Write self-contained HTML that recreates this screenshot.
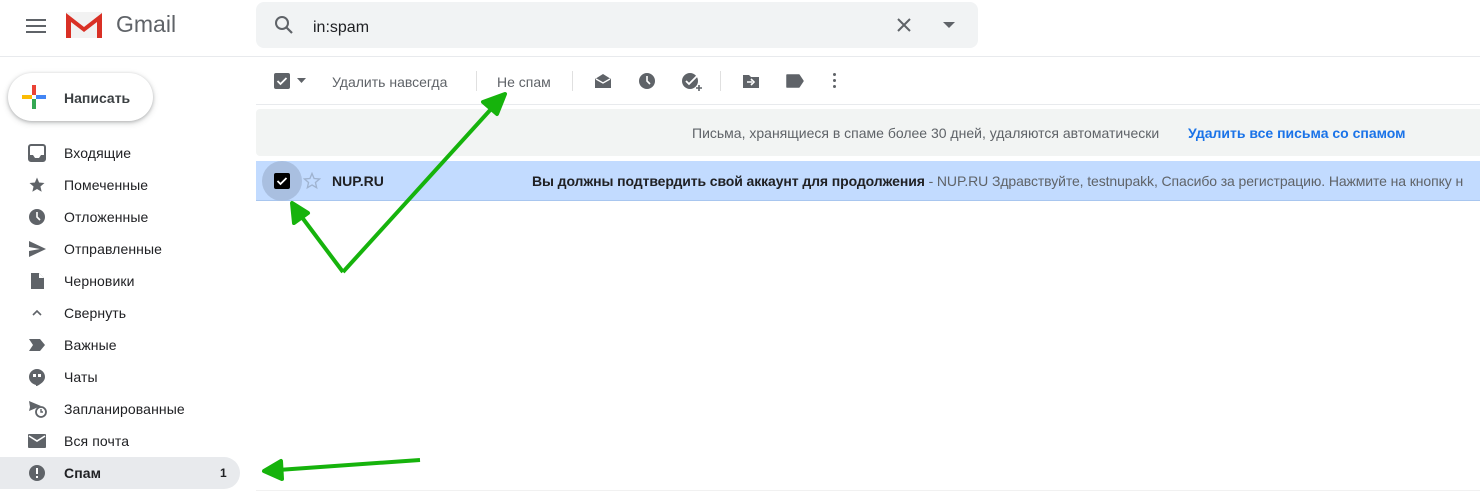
<!DOCTYPE html>
<html><head><meta charset="utf-8"><style>
*{margin:0;padding:0;box-sizing:border-box}
body{width:1480px;height:497px;overflow:hidden;background:#fff;font-family:"Liberation Sans",Arial,sans-serif;position:relative;color:#202124}
.a{position:absolute}
.nav{position:absolute;left:64px;font-size:14px;color:#202124;letter-spacing:0.1px}
.ic{position:absolute;left:28px}
</style></head><body>
<div class="a" style="left:26px;top:19px;width:20px;height:2px;background:#5f6368;box-shadow:0 6px 0 #5f6368,0 12px 0 #5f6368"></div>
<svg class="a" style="left:64px;top:11px" width="40" height="28" viewBox="0 0 40 28">
<rect x="2" y="1" width="36" height="26" fill="#f2f2f2"/>
<path d="M2 27V2l18 14L38 2v25h-5V11L20 21 7 11v16z" fill="#d93025"/>
</svg>
<div class="a" style="left:116px;top:11px;font-size:23px;color:#5f6368">Gmail</div>
<div class="a" style="left:256px;top:2px;width:722px;height:46px;background:#f1f3f4;border-radius:8px"></div>
<svg class="a" style="left:274px;top:15px" width="20" height="20" viewBox="0 0 20 20"><circle cx="8" cy="8" r="6" fill="none" stroke="#5f6368" stroke-width="2"/><path d="M12.5 12.5l5.5 5.5" stroke="#5f6368" stroke-width="2.2"/></svg>
<div class="a" style="left:313px;top:19px;font-size:16px;color:#202124">in:spam</div>
<svg class="a" style="left:896px;top:17px" width="16" height="16"><path d="M2 2l12 12M14 2L2 14" stroke="#5f6368" stroke-width="2"/></svg>
<svg class="a" style="left:943px;top:22px" width="12" height="7"><path d="M0 0h12L6 6z" fill="#5f6368"/></svg>
<div class="a" style="left:0;top:56px;width:1480px;height:1px;background:#e8eaed"></div>
<div class="a" style="left:8px;top:73px;width:145px;height:48px;border-radius:24px;background:#fff;box-shadow:0 1px 3px rgba(60,64,67,.3),0 2px 6px 1px rgba(60,64,67,.15)"></div>
<svg class="a" style="left:22px;top:85px" width="24" height="24" viewBox="0 0 24 24">
<rect x="10" y="0" width="4" height="10" fill="#ea4335"/><rect x="14" y="10" width="10" height="4" fill="#4285f4"/><rect x="10" y="14" width="4" height="10" fill="#34a853"/><rect x="0" y="10" width="10" height="4" fill="#fbbc04"/></svg>
<div class="a" style="left:64px;top:90px;font-size:14px;font-weight:bold;color:#3c4043">Написать</div>
<div class="a" style="left:0;top:457px;width:240px;height:32px;background:#e8eaed;border-radius:0 16px 16px 0"></div>
<svg class="ic" style="top:144px" width="18" height="18"><rect x="1" y="1" width="16" height="16" rx="2" fill="none" stroke="#5f6368" stroke-width="2"/><path d="M1 11h4l2 3h4l2-3h4v6H1z" fill="#5f6368"/></svg>
<div class="nav" style="top:145px">Входящие</div>
<svg class="ic" style="top:176px" width="18" height="18" viewBox="0 0 24 24"><path d="M12 17.3l6.2 3.7-1.6-7 5.4-4.7-7.2-.6L12 2 9.2 8.7 2 9.3l5.4 4.7-1.6 7z" fill="#5f6368"/></svg>
<div class="nav" style="top:177px">Помеченные</div>
<svg class="ic" style="top:208px" width="18" height="18"><circle cx="9" cy="9" r="8" fill="#5f6368"/><path d="M9 4v5l3 3" stroke="#fff" stroke-width="1.6" fill="none"/></svg>
<div class="nav" style="top:209px">Отложенные</div>
<svg class="ic" style="top:240px" width="18" height="18"><path d="M1 1l17 8-17 8 0-6 11-2-11-2z" fill="#5f6368"/></svg>
<div class="nav" style="top:241px">Отправленные</div>
<svg class="ic" style="top:272px" width="18" height="18"><path d="M3 1h8l5 5v11H3z" fill="#5f6368"/><path d="M11 1v5h5" fill="#fff"/></svg>
<div class="nav" style="top:273px">Черновики</div>
<svg class="ic" style="top:304px" width="18" height="18"><path d="M5 11l4-4 4 4" stroke="#5f6368" stroke-width="1.6" fill="none"/></svg>
<div class="nav" style="top:305px">Свернуть</div>
<svg class="ic" style="top:336px" width="18" height="18"><path d="M1 3h11l5 6-5 6H1l4-6z" fill="#5f6368"/></svg>
<div class="nav" style="top:337px">Важные</div>
<svg class="ic" style="top:368px" width="18" height="18"><path d="M9 1a8 8 0 0 0-8 8c0 4 3 7 7 8v1l1 0c4-2 8-5 8-9a8 8 0 0 0-8-8z" fill="#5f6368"/><rect x="5" y="6" width="3" height="3" fill="#fff"/><rect x="10" y="6" width="3" height="3" fill="#fff"/></svg>
<div class="nav" style="top:369px">Чаты</div>
<svg class="ic" style="top:400px" width="20" height="18"><path d="M1 1l12 5-12 5 1-4z" fill="#5f6368"/><circle cx="13" cy="12" r="5" fill="#fff" stroke="#5f6368" stroke-width="1.8"/><path d="M13 9v3h2" stroke="#5f6368" stroke-width="1.4" fill="none"/></svg>
<div class="nav" style="top:401px">Запланированные</div>
<svg class="ic" style="top:432px" width="18" height="18"><rect x="0" y="2" width="18" height="14" rx="1" fill="#5f6368"/><path d="M1 4l8 5 8-5" stroke="#fff" stroke-width="1.6" fill="none"/></svg>
<div class="nav" style="top:433px">Вся почта</div>
<svg class="ic" style="top:464px" width="18" height="18"><circle cx="9" cy="9" r="8" fill="#5f6368"/><rect x="8" y="4" width="2" height="6" fill="#fff"/><rect x="8" y="12" width="2" height="2" fill="#fff"/></svg>
<div class="nav" style="top:465px;font-weight:bold">Спам</div>
<div class="a" style="left:220px;top:466px;font-size:12px;font-weight:bold">1</div>
<div class="a" style="left:274px;top:73px;width:16px;height:16px;background:#5f6368;border-radius:2px"></div>
<svg class="a" style="left:274px;top:73px" width="16" height="16"><path d="M3.5 8l3 3 6-6" stroke="#fff" stroke-width="1.8" fill="none"/></svg>
<svg class="a" style="left:297px;top:78px" width="9" height="5"><path d="M0 0h9L4.5 5z" fill="#5f6368"/></svg>
<div class="a" style="left:332px;top:74px;font-size:14px;color:#5f6368">Удалить навсегда</div>
<div class="a" style="left:476px;top:71px;width:1px;height:20px;background:#e0e0e0"></div>
<div class="a" style="left:497px;top:74px;font-size:14px;color:#5f6368">Не спам</div>
<div class="a" style="left:572px;top:71px;width:1px;height:20px;background:#e0e0e0"></div>
<svg class="a" style="left:594px;top:72px" width="18" height="18"><path d="M1 7l8-5 8 5v9H1z" fill="#5f6368"/><path d="M2 7l7 4 7-4" stroke="#fff" stroke-width="1.3" fill="none"/></svg>
<svg class="a" style="left:638px;top:72px" width="18" height="18"><circle cx="9" cy="9" r="8" fill="#5f6368"/><path d="M9 4v5l3 3" stroke="#fff" stroke-width="1.6" fill="none"/></svg>
<svg class="a" style="left:681px;top:71px" width="22" height="22"><circle cx="9" cy="10" r="8" fill="#5f6368"/><path d="M5 10l3 3 9-9" stroke="#fff" stroke-width="1.8" fill="none"/><path d="M15 17h6M18 14v6" stroke="#5f6368" stroke-width="1.6"/></svg>
<div class="a" style="left:720px;top:71px;width:1px;height:20px;background:#e0e0e0"></div>
<svg class="a" style="left:742px;top:72px" width="18" height="18"><path d="M1 3h6l2 2h8v11H1z" fill="#5f6368"/><path d="M5 10h5M9 7l3 3-3 3" stroke="#fff" stroke-width="1.6" fill="none"/></svg>
<svg class="a" style="left:786px;top:73px" width="18" height="16"><path d="M1 2h12l4 6-4 6H1z" fill="#5f6368" stroke="#5f6368" stroke-linejoin="round" stroke-width="1.5"/></svg>
<div class="a" style="left:833px;top:73px;width:3px;height:3px;background:#5f6368;border-radius:50%;box-shadow:0 6px 0 #5f6368,0 12px 0 #5f6368"></div>
<div class="a" style="left:256px;top:104px;width:1224px;height:1px;background:#e8eaed"></div>
<div class="a" style="left:256px;top:109px;width:1224px;height:47px;background:#f2f4f3;border-radius:4px 0 0 4px"></div>
<div class="a" style="left:692px;top:125px;font-size:14px;color:#5f6368">Письма, хранящиеся в спаме более 30 дней, удаляются автоматически</div>
<div class="a" style="left:1188px;top:125px;font-size:14px;font-weight:bold;color:#1a73e8">Удалить все письма со спамом</div>
<div class="a" style="left:256px;top:161px;width:1224px;height:40px;background:#c2dbff;border-bottom:1px solid #a8c6ef"></div>
<div class="a" style="left:262px;top:161px;width:40px;height:40px;border-radius:50%;background:#a9bfe0"></div>
<div class="a" style="left:274px;top:173px;width:16px;height:16px;background:#000;border-radius:2px"></div>
<svg class="a" style="left:274px;top:173px" width="16" height="16"><path d="M3.5 8l3 3 6-6" stroke="#fff" stroke-width="1.8" fill="none"/></svg>
<svg class="a" style="left:303px;top:172px" width="18" height="18" viewBox="0 0 24 24"><path d="M12 17.3l6.2 3.7-1.6-7 5.4-4.7-7.2-.6L12 2 9.2 8.7 2 9.3l5.4 4.7-1.6 7z" fill="none" stroke="#9fb3d0" stroke-width="1.8"/></svg>
<div class="a" style="left:332px;top:173px;font-size:14px;font-weight:bold">NUP.RU</div>
<div class="a" style="left:532px;top:173px;font-size:14px;white-space:nowrap;letter-spacing:-0.1px"><b>Вы должны подтвердить свой аккаунт для продолжения</b><span style="color:#5f6368"> - NUP.RU Здравствуйте, testnupakk, Спасибо за регистрацию. Нажмите на кнопку н</span></div>
<div class="a" style="left:256px;top:490px;width:1224px;height:1px;background:#f1f1f1"></div>
<svg class="a" style="left:0;top:0" width="1480" height="497">
<g stroke="#16b30c" stroke-width="4" fill="#16b30c" stroke-linejoin="round">
<path d="M343 272L492 108" fill="none"/>
<path d="M505 94l-22 8 14 12z"/>
<path d="M343 272L298 212" fill="none"/>
<path d="M292 203l2 20 14-10z"/>
<path d="M420 460L278 470" fill="none"/>
<path d="M264 471l17-10 1 18z"/>
</g></svg>
</body></html>
